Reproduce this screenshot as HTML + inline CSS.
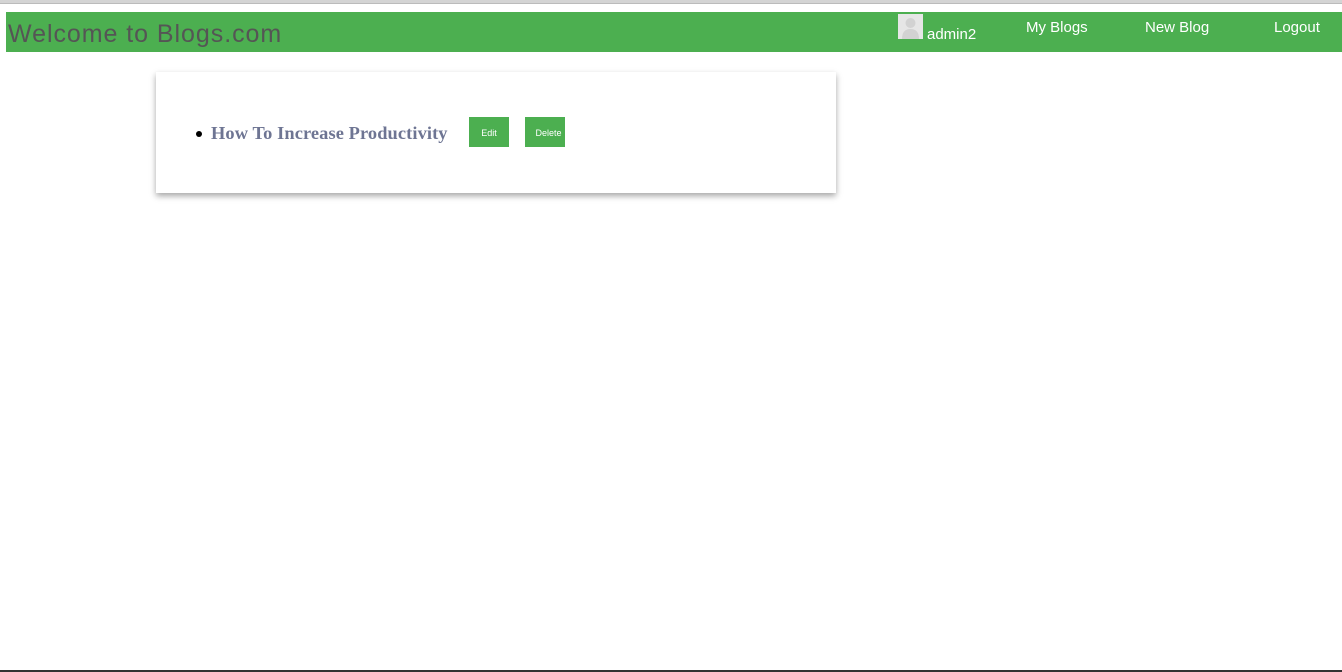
<!DOCTYPE html>
<html><head><style>
body{margin:0;width:1342px;height:672px;background:#fff;position:relative;overflow:hidden;font-family:"Liberation Sans",sans-serif}
.top{position:absolute;left:0;top:0;width:1342px;height:3px;background:#d4d4d4;border-bottom:1px solid #bbb}
.nav{position:absolute;left:6px;top:12px;width:1336px;height:40px;background:#4caf50}
.title{position:absolute;left:2px;top:8px;font-size:25px;color:#555;letter-spacing:0.95px}
.n{position:absolute;color:#fff;font-size:15px}
.av{position:absolute;left:892px;top:2px;width:25px;height:25px;background:#e6e6e6}
.card{position:absolute;left:156px;top:72px;width:680px;height:121px;background:#fff;box-shadow:0 3px 6px rgba(0,0,0,.35)}
.dot{position:absolute;left:40px;top:59px;width:6px;height:6px;border-radius:50%;background:#000}
.h{position:absolute;left:55px;top:51px;font-family:"Liberation Serif",serif;font-weight:bold;font-size:18.4px;color:#6e7593;letter-spacing:0.1px}
.b{position:absolute;top:45px;height:30px;background:#4caf50;color:#fff;font-size:9px;line-height:32px;text-align:center}
.bottom{position:absolute;left:0;top:670px;width:1342px;height:2px;background:#333}
</style></head><body>
<div class="top"></div>
<div class="nav">
<div class="title">Welcome to Blogs.com</div>
<div class="av"><svg width="25" height="25"><circle cx="12.5" cy="9" r="5" fill="#d2d2d2"/><path d="M4 25 Q4 15 12.5 15 Q21 15 21 25Z" fill="#d2d2d2"/></svg></div>
<div class="n" style="left:921px;top:14px">admin2</div>
<div class="n" style="left:1020px;top:7px">My Blogs</div>
<div class="n" style="left:1139px;top:7px">New Blog</div>
<div class="n" style="left:1268px;top:7px">Logout</div>
</div>
<div class="card">
<div class="dot"></div>
<div class="h">How To Increase Productivity</div>
<div class="b" style="left:313px;width:40px">Edit</div>
<div class="b" style="left:369px;width:40px;text-indent:7px">Delete</div>
</div>
<div class="bottom"></div>
</body></html>
